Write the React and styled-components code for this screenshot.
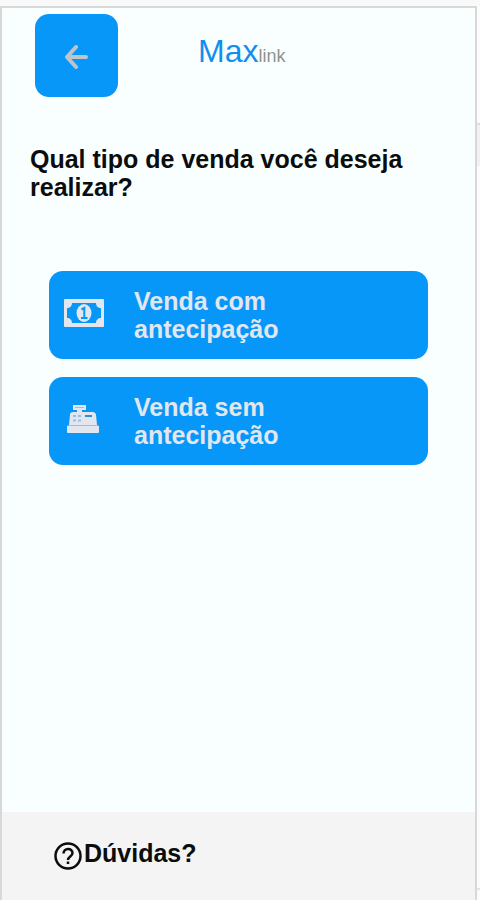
import React from "react";
import styled, { createGlobalStyle } from "styled-components";

const GlobalStyle = createGlobalStyle`
  * {
    box-sizing: border-box;
  }

  body {
    margin: 0;
    background-color: #f9f9f9;
    font-family: "Liberation Sans", Arial, Helvetica, sans-serif;
  }
`;

const Page = styled.div`
  display: grid;
  grid-template-columns: 1fr 3px;
  min-height: 100vh;
  padding-top: 6px;
`;

const Screen = styled.div`
  display: flex;
  flex-direction: column;
  background-color: #f9ffff;
  border: 2px solid #d8d8d8;
  border-bottom: none;
`;

const Gutter = styled.div`
  display: flex;
  flex-direction: column;
  padding: 117px 0 10px;
  background-color: #fcfcfc;
`;

const GutterBlock = styled.div`
  height: 43px;
  border-top: 2px solid #dcdcdc;
  background-color: #f1f1f1;
`;

const GutterLine = styled.div`
  height: 2px;
  margin-top: auto;
  background-color: #e4e4e4;
`;

const Header = styled.header`
  display: flex;
  align-items: flex-start;
  gap: 80px;
  padding: 6px 33px 0;
`;

const BackButton = styled.button`
  display: flex;
  align-items: center;
  justify-content: center;
  width: 83px;
  height: 83px;
  padding: 3px 0 0;
  border: none;
  border-radius: 14px;
  background-color: #0797f8;
  color: #bfc3cc;
  cursor: pointer;
`;

const Logo = styled.div`
  margin-top: 19px;
  color: #118fee;
  font-size: 32px;
  line-height: 36px;
`;

const LogoSuffix = styled.span`
  color: #8f9292;
  font-size: 18px;
`;

const Main = styled.main`
  flex: 1;
  padding: 48px 47px 0;
`;

const Title = styled.h1`
  margin: 0 -19px 70px;
  color: #0b0d0d;
  font-size: 25px;
  font-weight: 700;
  line-height: 28px;
`;

const Options = styled.div`
  display: flex;
  flex-direction: column;
  gap: 18px;
`;

const Option = styled.button`
  display: flex;
  align-items: center;
  gap: 28px;
  height: 88px;
  padding: 0 13px;
  border: none;
  border-radius: 14px;
  background-color: #0797f8;
  color: #e2e6ee;
  font-family: inherit;
  font-size: 25px;
  font-weight: 700;
  line-height: 28px;
  text-align: left;
  cursor: pointer;
`;

const OptionIcon = styled.span`
  display: flex;
  flex: none;
  width: 44px;
  padding-bottom: 4px;
`;

const OptionText = styled.span`
  max-width: 180px;
`;

const Footer = styled.footer`
  padding: 24px 52px 26px;
  background-color: #f4f4f4;
`;

const HelpLink = styled.a`
  display: inline-flex;
  align-items: center;
  gap: 2px;
  color: #0b0d0d;
  font-size: 25px;
  font-weight: 700;
  line-height: 32px;
  text-decoration: none;

  svg {
    margin-top: 6px;
  }
`;

const ArrowIcon = () => (
  <svg width="24" height="24" viewBox="0 0 24 24" fill="none" stroke="currentColor" strokeWidth="4" strokeLinecap="round" strokeLinejoin="round" aria-hidden="true">
    <path d="M21 12H3M11 2L2 12l9 10" />
  </svg>
);

const MoneyIcon = () => (
  <svg width="44" height="28" viewBox="0 0 44 28" fill="currentColor" aria-hidden="true">
    <path
      fillRule="evenodd"
      d="M3 0h38a1 1 0 0 1 1 1v26a1 1 0 0 1-1 1H3a1 1 0 0 1-1-1V1a1 1 0 0 1 1-1zM10 4C10 7 8 9 5 9v10c3 0 5 2 5 5h24c0-3 2-5 5-5V9c-3 0-5-2-5-5z"
    />
    <ellipse cx="22" cy="14" rx="7.5" ry="9" />
    <path d="M19.500 10.500l2.800-1.500v9.500M19 19h6.500" fill="none" stroke="#0797f8" strokeWidth="2" />
  </svg>
);

const RegisterIcon = () => (
  <svg width="44" height="30" viewBox="0 0 44 30" fill="currentColor" aria-hidden="true">
    <path d="M11 1h13v5h-4v2h11q2.500 0 3 2.500L35 21H7l1-10.500Q8 8 11 8h4V6h-4z" />
    <rect x="5" y="21.500" width="32" height="7.500" rx="1" />
    <path d="M13 3.500h9" stroke="#92c3ef" strokeWidth="1" />
    <path d="M7 21.500h28" stroke="#92c3ef" strokeWidth="1" />
    <path d="M23 12h7" stroke="#2b8fe0" strokeWidth="2" />
    <path d="M11 12h3m2 0h3M11 16.500h3m2 0h3" stroke="#98bfe2" strokeWidth="2" />
  </svg>
);

const HelpIcon = () => (
  <svg width="28" height="28" viewBox="0 0 28 28" fill="none" stroke="currentColor" strokeWidth="2.500" aria-hidden="true">
    <circle cx="14" cy="14" r="12.500" />
    <path d="M9.500 11.500c0-6 9-6 9-.5 0 3.500-4.500 3.500-4.500 7" />
    <path d="M14 19.500v2.500" />
  </svg>
);

const options = [
  { label: "Venda com antecipação", Icon: MoneyIcon },
  { label: "Venda sem antecipação", Icon: RegisterIcon },
];

const App = () => {
  return (
    <>
      <GlobalStyle />
      <Page>
        <Screen>
          <Header>
            <BackButton type="button" aria-label="Voltar">
              <ArrowIcon />
            </BackButton>
            <Logo>
              Max<LogoSuffix>link</LogoSuffix>
            </Logo>
          </Header>
          <Main>
            <Title>Qual tipo de venda você deseja realizar?</Title>
            <Options>
              {options.map(({ label, Icon }) => (
                <Option key={label} type="button">
                  <OptionIcon>
                    <Icon />
                  </OptionIcon>
                  <OptionText>{label}</OptionText>
                </Option>
              ))}
            </Options>
          </Main>
          <Footer>
            <HelpLink href="#duvidas">
              <HelpIcon />
              Dúvidas?
            </HelpLink>
          </Footer>
        </Screen>
        <Gutter>
          <GutterBlock />
          <GutterLine />
        </Gutter>
      </Page>
    </>
  );
};

export default App;
